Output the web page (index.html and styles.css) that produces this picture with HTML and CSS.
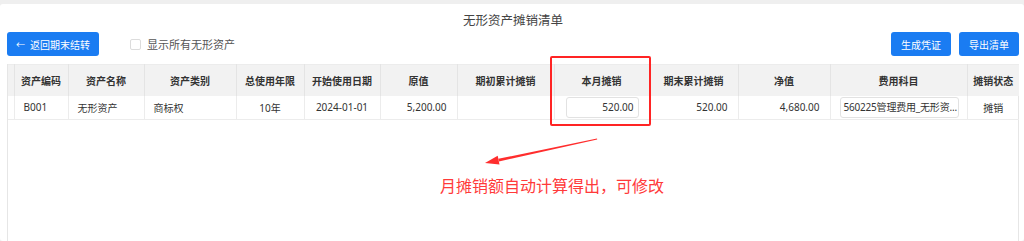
FILE: index.html
```html
<!DOCTYPE html>
<html lang="zh-CN">
<head>
<meta charset="utf-8">
<link rel="stylesheet" href="styles.css">
</head>
<body>
<div class="card">
  <h1 class="title">无形资产摊销清单</h1>
  <div class="toolbar">
    <div class="tool-left">
      <button class="btn"><span class="arr">←</span>返回期末结转</button>
      <label class="check"><span class="box"></span>显示所有无形资产</label>
    </div>
    <div class="tool-right">
      <button class="btn btn-sm">生成凭证</button>
      <button class="btn btn-sm">导出清单</button>
    </div>
  </div>
  <div class="table-wrap">
    <table class="grid">
      <colgroup>
        <col class="c0"><col class="c1"><col class="c2"><col class="c3"><col class="c4"><col class="c5"><col class="c6"><col class="c7"><col class="c8"><col class="c9"><col class="c10"><col class="c11"><col class="c12">
      </colgroup>
      <thead>
        <tr>
          <th></th><th>资产编码</th><th>资产名称</th><th>资产类别</th><th>总使用年限</th><th>开始使用日期</th><th>原值</th><th>期初累计摊销</th><th>本月摊销</th><th>期末累计摊销</th><th>净值</th><th>费用科目</th><th>摊销状态</th>
        </tr>
      </thead>
      <tbody>
        <tr>
          <td></td>
          <td class="l">B001</td>
          <td class="l">无形资产</td>
          <td class="l">商标权</td>
          <td class="c">10年</td>
          <td class="c">2024-01-01</td>
          <td class="r">5,200.00</td>
          <td class="r"></td>
          <td class="inp-cell"><div class="inp r-inp">520.00</div></td>
          <td class="r">520.00</td>
          <td class="r">4,680.00</td>
          <td class="inp-cell2"><div class="inp l-inp">560225管理费用_无形资...</div></td>
          <td class="c">摊销</td>
        </tr>
      </tbody>
    </table>
  </div>
  <div class="hl-box"></div>
  <svg class="arrow" width="1024" height="241" viewBox="0 0 1024 241">
    <polygon points="597,138.6 597.2,139.4 498.9,161.4 498.3,158.8" fill="#ff2d2d"/>
    <polygon points="485,163 499.5,164.4 497.7,155.8" fill="#ff2d2d"/>
  </svg>
  <div class="note">月摊销额自动计算得出，可修改</div>
</div>
</body>
</html>
```
FILE: styles.css
```css
* { box-sizing: border-box; }
html, body { margin: 0; padding: 0; }
body {
  background: #efefef;
  font-family: "Noto Sans", "Noto Sans CJK SC", sans-serif;
  color: #333;
  height: 241px;
  overflow: hidden;
}
.card {
  position: relative;
  margin-top: 4px;
  background: #fff;
  border-radius: 3px;
  padding: 8px 5px 0 7px;
  height: 237px;
  display: flex;
  flex-direction: column;
}
.title {
  margin: 0;
  font-size: 12.5px;
  font-weight: normal;
  line-height: 16px;
  text-align: center;
  color: #444;
  font-family: "Noto Sans CJK SC", sans-serif;
}
.toolbar {
  margin-top: 4px;
  display: flex;
  justify-content: space-between;
  align-items: center;
  height: 24px;
  flex: none;
}
.tool-left, .tool-right { display: flex; align-items: center; }
.tool-right { gap: 8px; }
.btn {
  height: 24px;
  border: none;
  border-radius: 3px;
  background: #1a7cf2;
  color: #fff;
  font-family: "Noto Sans CJK SC", sans-serif;
  font-size: 10px;
  padding: 0;
  width: 92px;
  display: flex;
  align-items: center;
  justify-content: center;
}
.btn .arr { font-size: 9px; margin-right: 5px; }
.btn-sm { width: 60px; }
.check {
  margin-left: 31px;
  display: flex;
  align-items: center;
  font-size: 11px;
  color: #555;
  font-family: "Noto Sans CJK SC", sans-serif;
}
.box {
  width: 11px;
  height: 11px;
  border: 1px solid #dcdcdc;
  border-radius: 2px;
  margin-right: 6px;
  background: #fff;
}
.table-wrap {
  margin-top: 8px;
  border-left: 1px solid #e6e6e6;
  border-right: 1px solid #e6e6e6;
  flex: 1;
}
.grid {
  width: 100%;
  border-collapse: collapse;
  table-layout: fixed;
  font-family: "Noto Sans", "Noto Sans CJK SC", sans-serif;
  font-size: 10px;
}
.c0 { width: 6px; }
.c1 { width: 54px; }
.c2 { width: 76px; }
.c3 { width: 92px; }
.c4 { width: 68px; }
.c5 { width: 76px; }
.c6 { width: 77px; }
.c7 { width: 97px; }
.c8 { width: 95px; }
.c9 { width: 89px; }
.c10 { width: 92px; }
.c11 { width: 137px; }
.c12 { width: 52px; }
.grid th {
  background: #f2f2f2;
  height: 31px;
  font-weight: bold;
  color: #333;
  border-right: 1px solid #e4e4e4;
  border-top: 1px solid #ececec;
  text-align: center;
  padding: 0;
  white-space: nowrap;
  overflow: hidden;
  font-family: "Noto Sans CJK SC", sans-serif;
}
.grid th:last-child, .grid td:last-child { border-right: none; }
.grid td {
  height: 24px;
  border-right: 1px solid #ececec;
  border-bottom: 1px solid #ececec;
  padding: 0 9px;
  white-space: nowrap;
  overflow: hidden;
  color: #333;
}
.grid td.l { text-align: left; }
.grid td.c { text-align: center; padding: 0; }
.grid td.r { text-align: right; padding-right: 10px; }
.grid td.inp-cell { padding: 0 10px 0 11px; }
.grid td.inp-cell2 { padding: 0 8px 0 9px; }
.inp {
  height: 21px;
  line-height: 19px;
  border: 1px solid #e2e2e2;
  border-radius: 3px;
  background: #fff;
  padding: 0 3px;
  white-space: nowrap;
}
.r-inp { text-align: right; padding-right: 4px; }
.l-inp { text-align: left; letter-spacing: -0.2px; }
.hl-box {
  position: absolute;
  left: 550px;
  top: 52px;
  width: 101px;
  height: 70px;
  border: 2px solid #ff2424;
  border-radius: 2px;
}
.arrow {
  position: absolute;
  left: 0;
  top: -4px;
  pointer-events: none;
}
.note {
  position: absolute;
  left: 440px;
  top: 171px;
  font-size: 16px;
  line-height: 20px;
  color: #ff3a3a;
  font-family: "Noto Sans CJK SC", sans-serif;
  white-space: nowrap;
}
```
